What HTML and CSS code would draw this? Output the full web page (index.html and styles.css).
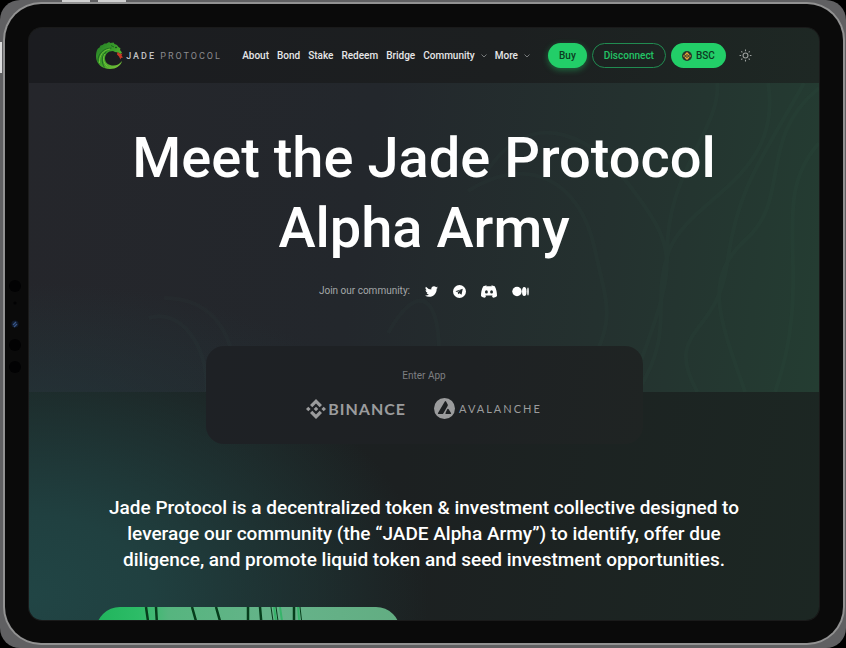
FILE: index.html
```html
<!DOCTYPE html>
<html lang="en">
<head>
<meta charset="utf-8">
<meta name="viewport" content="width=device-width, initial-scale=1">
<title>Jade Protocol</title>
<link rel="stylesheet" href="styles.css">
</head>
<body>
<div class="stage">
<span class="key key-one"></span><span class="key key-two"></span><span class="key key-side"></span>
<div class="tablet">
  <svg class="sensors" viewBox="0 0 14 100" aria-hidden="true">
    <circle cx="7" cy="8" r="6" fill="#020203"/><circle cx="7" cy="25" r="1.5" fill="#020203"/>
    <circle cx="7" cy="46" r="3.6" fill="#101a2c"/><path d="M5 47l3-3M6 49l3-3" stroke="#375587" stroke-width="1.3"/>
    <circle cx="7" cy="67" r="6" fill="#020203"/><circle cx="7" cy="89" r="6" fill="#020203"/>
  </svg>
  <div class="screen">
    <header class="topbar">
      <div class="container bar">
        <a class="brand" href="#">
          <svg class="dragon" viewBox="0 0 54 54" aria-hidden="true">
            <defs><linearGradient id="jade" x1="0" y1="0" x2="1" y2="1"><stop offset="0" stop-color="#237b27"/><stop offset=".5" stop-color="#3da12a"/><stop offset="1" stop-color="#82c83b"/></linearGradient></defs>
            <path fill="url(#jade)" d="M4 13L7 11 9 7 13 6 17 3 21 3 26 0 29 2 35 1 37 4 42 6 44 9 49 13 48 16 52 21 49 24 44 21 38 20 34 18C24 18 18 25 18 33c0 9 8 14 17 14 7 0 12-3 17-9-2 9-12 16-24 16C12 54 0 43 0 29 0 22 1 17 4 13Z"/>
            <path fill="none" stroke="#175822" stroke-width="1.500" d="M4 39C3 24 14 13 31 12M17 51C10 40 11 27 21 19M30 7l6 3"/>
            <path fill="none" stroke="#76c43a" stroke-width="1.800" d="M7 42C6 27 14 16 28 14M23 49c-9-8-10-18-5-25"/>
            <path fill="#c83a25" d="M43 20l6 4 4-1-2 4 3 4-4 1-1 3-3-6-4-4z"/><circle cx="40" cy="11" r="1.5" fill="#102819"/>
          </svg>
          <span class="wordmark"><b>JADE</b> PROTOCOL</span>
        </a>
        <nav class="nav" aria-label="Main">
          <a href="#">About</a><a href="#">Bond</a><a href="#">Stake</a><a href="#">Redeem</a><a href="#">Bridge</a>
          <a href="#">Community<svg class="chevron" viewBox="0 0 6 4"><path d="M.5 .5L3 3 5.500 .5"/></svg></a>
          <a href="#">More<svg class="chevron" viewBox="0 0 6 4"><path d="M.5 .5L3 3 5.500 .5"/></svg></a>
        </nav>
        <div class="actions">
          <button class="pill solid glow">Buy</button>
          <button class="pill outline">Disconnect</button>
          <button class="pill solid"><svg class="coin" viewBox="0 0 20 20" aria-hidden="true"><circle cx="10" cy="10" r="10" fill="#26352c"/><g fill="#e8a33a"><path d="M10 2l5 5-2 2-3-3-3 3-2-2zM10 18l5-5-2-2-3 3-3-3-2 2zM10 8l2 2-2 2-2-2zM4 8l2 2-2 2-2-2zM16 8l2 2-2 2-2-2z"/></g></svg>BSC</button>
          <button class="theme" aria-label="Toggle theme"><svg viewBox="0 0 24 24"><circle cx="12" cy="12" r="4.500"/><path d="M12 1v3M12 20v3M1 12h3M20 12h3M4.200 4.200l2 2M17.800 17.800l2 2M4.200 19.800l2-2M17.800 6.200l2-2"/></svg></button>
        </div>
      </div>
    </header>
    <main>
      <section class="hero">
        <svg class="scales" viewBox="0 0 792 309" preserveAspectRatio="none" aria-hidden="true"><path d="M792 5C730 55 764 115 720 155S690 230 718 309M777 0C735 75 710 105 700 180S635 245 670 309M741 0C756 95 662 115 642 167S650 245 610 309M690 0C694 47 635 91 640 180M792 60C738 120 790 190 748 309M460 87C498 30 555 40 604 105S650 180 602 309M440 108C500 70 552 97 567 165S590 235 549 309M120 235C150 225 180 260 178 309M135 215C190 215 210 260 205 309M360 250C400 180 420 235 407 309"/></svg>
        <div class="container hero-copy">
          <h1>Meet the Jade Protocol Alpha Army</h1>
          <div class="community">
            <span>Join our community:</span>
            <a href="#" aria-label="Twitter"><svg width="13" height="13" viewBox="0 0 24 24"><path d="M23.950 4.600a10 10 0 0 1-2.800.8 4.900 4.900 0 0 0 2.100-2.700 9.900 9.900 0 0 1-3.100 1.200 4.900 4.900 0 0 0-8.400 4.500A14 14 0 0 1 1.700 3.200a4.900 4.900 0 0 0 1.500 6.500 4.900 4.900 0 0 1-2.200-.6v.1a4.900 4.900 0 0 0 3.900 4.800 5 5 0 0 1-2.200.1 4.900 4.900 0 0 0 4.600 3.400A9.900 9.900 0 0 1 0 19.500 14 14 0 0 0 7.500 21.700c9.100 0 14.300-7.700 14-14.600a10 10 0 0 0 2.450-2.500z"/></svg></a>
            <a href="#" aria-label="Telegram"><svg width="13" height="13" viewBox="0 0 24 24"><path fill-rule="evenodd" d="M12 0a12 12 0 1 0 0 24 12 12 0 0 0 0-24zm6 7l-2.300 11-4-3-2.200 2-.8-3.700 6-5-7.200 4.400-3-1z"/></svg></a>
            <a href="#" aria-label="Discord"><svg width="16" height="13" viewBox="0 0 28 22"><path fill-rule="evenodd" d="M10 0L9 2h10l-1-2 6 2c3 5 4 11 4 17-2 2-4 3-7 3l-2-3 2-1H7l2 1-2 3c-3 0-5-1-7-3C0 13 1 7 4 2zM9.500 9a2.500 2.800 0 1 0 0 5.600 2.500 2.800 0 0 0 0-5.600zm9 0a2.500 2.800 0 1 0 0 5.600 2.500 2.800 0 0 0 0-5.600z"/></svg></a>
            <a href="#" aria-label="Medium"><svg width="17" height="11" viewBox="0 0 34 20"><circle cx="10" cy="10" r="9.500"/><ellipse cx="24.500" cy="10" rx="4.500" ry="9"/><ellipse cx="32" cy="10" rx="1.600" ry="8"/></svg></a>
          </div>
        </div>
      </section>
      <section class="enter">
        <h2>Enter App</h2>
        <div class="networks">
          <a class="binance" href="#"><svg width="20" height="20" viewBox="0 0 20 20"><path d="M10 0l6 6-2.300 2.300L10 4.600 6.300 8.300 4 6zM10 20l6-6-2.300-2.300-3.700 3.700-3.700-3.700L4 14zM10 7.700l2.300 2.300-2.300 2.300L7.700 10zM2.300 7.700L4.600 10l-2.300 2.300L0 10zM17.700 7.700L20 10l-2.300 2.300-2.300-2.300z"/></svg>BINANCE</a>
          <a class="avalanche" href="#"><svg width="21" height="21" viewBox="0 0 21 21"><circle cx="10.500" cy="10.500" r="10.500"/><path fill="#1e2123" d="M10.800 3.500Q11.500 2.500 12.200 3.700L13.700 6.500Q14 7.200 13.600 7.900L9.300 15.500Q8.900 16 8.100 16H4.500Q3.500 16 4 15zM13.200 11.300Q14 10.200 14.700 11.300L17 15Q17.500 16 16.500 16H12Q11 16 11.500 15z"/></svg>AVALANCHE</a>
        </div>
      </section>
      <section class="container about">
        <p>Jade Protocol is a decentralized token &amp; investment collective designed to leverage our community (the “JADE Alpha Army”) to identify, offer due diligence, and promote liquid token and seed investment opportunities.</p>
        <div class="feature">
          <svg viewBox="0 0 304 100" aria-hidden="true"><g stroke="#063d1b" fill="none"><path stroke-width="2.500" d="M50 0l5 35M60 0l2 35M96 0l10 35M120 0l10 35M152 0v35M164 0l3 35M198 0v35"/><path stroke-width="1" d="M175 0l5 35M180 0l5 35M204 0l4 35"/></g><path d="M178 0l5 35M184 0l5 35M202 0l3 35" stroke="#36b46a" stroke-width="2"/></svg>
        </div>
      </section>
    </main>
  </div>
</div>
</div>
</body>
</html>
```
FILE: styles.css
```css
* { box-sizing: border-box; }
body { margin: 0; background: #000; color: #fff; font-family: Roboto, "Liberation Sans", sans-serif; }
a { color: inherit; text-decoration: none; }
button { font: inherit; cursor: pointer; }
svg { display: block; flex: none; }

.stage { position: relative; height: 100vh; padding: 4px 3px 5px 5px; background: #606062; border-radius: 20px; }
.key { position: absolute; top: 0; width: 28px; height: 2px; background: #d0d0d0; }
.key-one { left: 62px; }
.key-two { left: 98px; }
.key-side { left: 0; top: 42px; width: 2px; height: 31px; background: #ddd; }
.tablet { position: relative; height: 100%; padding: 24px 24px 23px; background: #0a0a0a; border-radius: 36px; box-shadow: 0 0 0 2px #929292; }
.sensors { position: absolute; left: 3px; top: 274px; width: 14px; height: 100px; }
.screen {
  height: 100%; overflow: hidden; border-radius: 13px;
  background:
    radial-gradient(ellipse 400px 270px at 0% 96%, #214545 0%, #204040 30%, transparent 100%),
    linear-gradient(100deg, #1c2322 0%, #1c2021 50%, #1c2723 100%);
  box-shadow: 0 0 0 1px #1a1a1a;
}
.container { width: 83%; margin: 0 auto; }

.topbar { height: 55px; background: linear-gradient(90deg, #1b1c20 0%, #1c1f20 60%, #1e2824 100%); }
.bar { display: flex; align-items: center; height: 100%; }
.brand { display: flex; align-items: center; gap: 3px; width: 146px; }
.dragon { width: 27px; height: 27px; }
.wordmark { font-size: 9px; letter-spacing: 2px; color: #8b8b8e; white-space: nowrap; }
.wordmark b { font-weight: 500; color: #c2c2c4; }
.nav { display: flex; gap: 8px; font-size: 10px; font-weight: 500; color: #e6e6e7; }
.nav a { display: flex; align-items: center; }
.chevron { width: 6px; height: 4px; margin-left: 6px; fill: none; stroke: #777a7b; }
.actions { display: flex; align-items: center; gap: 5px; margin-left: auto; }
.pill { display: flex; align-items: center; justify-content: center; gap: 4px; height: 25px; padding: 0 11px; border: 0; border-radius: 13px; font-size: 10px; font-weight: 500; }
.solid { background: #22ce68; color: #0c3a21; }
.glow { box-shadow: 0 2px 6px #22ce6870; }
.outline { border: 1px solid #218c51; background: transparent; color: #23c366; }
.coin { width: 10px; height: 10px; }
.theme { margin-left: 8px; padding: 0; border: 0; background: none; }
.theme svg { width: 13px; height: 13px; fill: none; stroke: #9da19f; stroke-width: 2; }

.hero {
  position: relative; height: 309px;
  background:
    radial-gradient(ellipse 340px 140px at 0% 110%, #22404480, transparent),
    linear-gradient(98deg, #25262b 0%, #23272c 42%, #24312f 72%, #243d32 100%);
}
.scales { position: absolute; inset: 0; width: 100%; height: 100%; fill: none; stroke: #5ba17b; stroke-opacity: .03; stroke-width: 4; }
.hero-copy { position: relative; padding-top: 40px; text-align: center; }
h1 { margin: 0; padding: 0 24px; font-size: 56px; line-height: 70px; font-weight: 500; }
.community { display: flex; align-items: center; justify-content: center; gap: 15px; margin-top: 20px; font-size: 10px; line-height: 16px; color: #a4a7a9; }
.community svg { fill: #fff; }

.enter { position: relative; width: 437px; max-width: 90%; height: 98px; margin: -46px auto 0; padding-top: 23px; border-radius: 18px; text-align: center; background: linear-gradient(100deg, #1e2125, #1e2123 60%, #1f2423); }
.enter h2 { margin: 0; font-size: 10px; line-height: 14px; font-weight: 400; color: #7d7f81; }
.networks { display: flex; align-items: center; justify-content: center; gap: 28px; margin-top: 15px; color: #9b9c9d; }
.networks a { display: flex; align-items: center; }
.networks svg { fill: #9b9c9d; }
.binance { gap: 2px; font: 700 16px Lato, sans-serif; letter-spacing: 1px; }
.avalanche { gap: 4px; font: 400 11px Lato, sans-serif; letter-spacing: 2px; }

.about { padding-top: 51px; text-align: center; }
.about p { margin: 0; font-size: 19px; line-height: 26px; font-weight: 500; }
.feature { width: 304px; height: 100px; margin-top: 34px; overflow: hidden; border-radius: 24px; background: linear-gradient(90deg, #20b45c 0%, #2dbc67 14%, #56b57f 24%, #66b38a 60%, #62ad82 100%); }
```
